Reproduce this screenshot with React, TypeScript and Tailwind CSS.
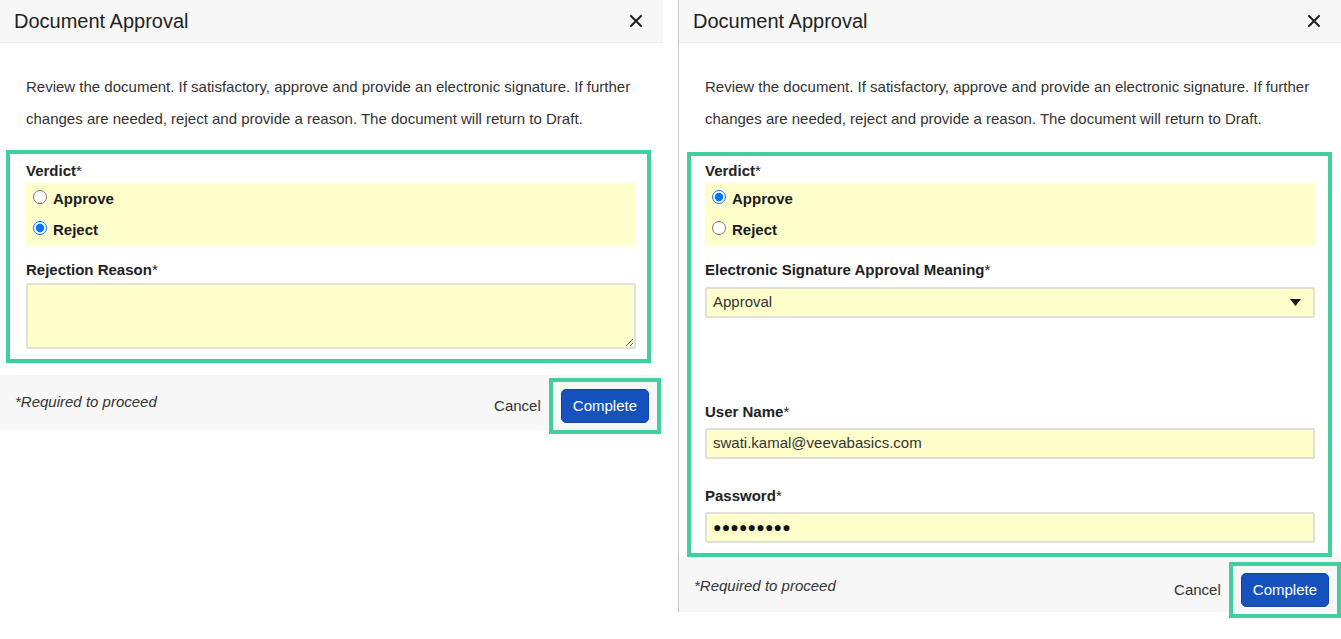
import type { ReactNode } from 'react'

function CloseIcon() {
  return (
    <svg width="12" height="12" viewBox="0 0 12 12" className="shrink-0">
      <path d="M1 1 L11 11 M11 1 L1 11" stroke="#1f1f1f" strokeWidth="2" strokeLinecap="round" />
    </svg>
  )
}

function Header() {
  return (
    <div className="flex h-[43px] items-center justify-between border-b border-[#ececec] bg-[#f7f7f7] pl-[14px] pr-[21px]">
      <h1 className="text-[20px] leading-none text-[#222]">Document Approval</h1>
      <CloseIcon />
    </div>
  )
}

function Intro() {
  return (
    <p className="mt-[28px] whitespace-nowrap px-[26px] text-[15px] leading-[32px] text-[#333]">
      Review the document. If satisfactory, approve and provide an electronic signature. If further
      <br />
      changes are needed, reject and provide a reason. The document will return to Draft.
    </p>
  )
}

function Label({ children, className = '' }: { children: ReactNode; className?: string }) {
  return (
    <div className={`text-[15px] font-bold leading-[18px] text-[#222] ${className}`}>
      {children}
      <span className="font-normal">*</span>
    </div>
  )
}

function RadioRow({ label, checked, name }: { label: string; checked: boolean; name: string }) {
  return (
    <label className="flex h-[31px] items-center pl-[7px]">
      <input type="radio" name={name} defaultChecked={checked} className="m-0 mb-[6px] mr-[6px] h-[14px] w-[14px]" />
      <span className="text-[15px] font-bold text-[#1a1a1a]">{label}</span>
    </label>
  )
}

function Verdict({ approve, name }: { approve: boolean; name: string }) {
  return (
    <div>
      <Label>Verdict</Label>
      <div className="mt-[3px] bg-[#ffffcc] pt-[1px]">
        <RadioRow name={name} label="Approve" checked={approve} />
        <RadioRow name={name} label="Reject" checked={!approve} />
      </div>
    </div>
  )
}

function Footer({ offset }: { offset: 'left' | 'right' }) {
  return (
    <div className={`flex h-[55px] items-center bg-[#f7f7f7] pl-[15px] ${offset === 'left' ? 'pr-[2px]' : 'pr-0'}`}>
      <div className={`flex-1 text-[15px] italic text-[#333] ${offset === 'left' ? '' : 'mt-[3px]'}`}>*Required to proceed</div>
      <div className={`flex items-center ${offset === 'left' ? 'mt-[7px]' : 'mt-[11px]'}`}>
        <span className="text-[15px] text-[#333]">Cancel</span>
        <div className="ml-[8px] border-4 border-[#40cf9d] px-[8px] py-[7px]">
          <button className="h-[34px] rounded-[5px] border border-[#0f44a6] bg-[#1652bd] px-[11px] text-[15px] text-white">
            Complete
          </button>
        </div>
      </div>
    </div>
  )
}

const field = 'flex h-[31px] items-center rounded-[2px] border-2 border-[#e0e0d8] bg-[#ffffcc] px-[6px] text-[15px] text-[#333]'

function LeftPanel() {
  return (
    <div className="w-[663px] shrink-0">
      <Header />
      <Intro />
      <div className="ml-[6px] mr-[12px] mt-[15px] border-4 border-[#40cf9d] pb-[10px] pl-[16px] pr-[11px] pt-[8px]">
        <Verdict name="left" approve={false} />
        <Label className="mt-[15px]">Rejection Reason</Label>
        <textarea
          className="mt-[4px] block h-[66px] w-full rounded-[2px] border-2 border-[#e0e0d8] bg-[#ffffcc]"
          defaultValue=""
        />
      </div>
      <div className="mt-[12px]">
        <Footer offset="left" />
      </div>
    </div>
  )
}

function RightPanel() {
  return (
    <div className="ml-[15px] w-[663px] shrink-0 border-l border-[#c4c4c4]">
      <Header />
      <Intro />
      <div className="ml-[8px] mr-[9px] mt-[17px] border-4 border-[#40cf9d] pb-[10px] pl-[14px] pr-[13px] pt-[6px]">
        <Verdict name="right" approve={true} />
        <Label className="mt-[15px]">Electronic Signature Approval Meaning</Label>
        <div className={`mt-[8px] justify-between pr-[12px] ${field}`}>
          <span>Approval</span>
          <svg width="11" height="7" viewBox="0 0 11 7">
            <path d="M0 0 H11 L5.5 7 Z" fill="#1a1a1a" />
          </svg>
        </div>
        <Label className="mt-[85px]">User Name</Label>
        <div className={`mt-[7px] ${field}`}>swati.kamal@veevabasics.com</div>
        <Label className="mt-[28px]">Password</Label>
        <div className={`mt-[7px] ${field}`}>
          <span className="text-[14px] tracking-[0.2px] text-[#111]">●●●●●●●●●</span>
        </div>
      </div>
      <Footer offset="right" />
    </div>
  )
}

export default function App() {
  return (
    <div className="flex min-h-[639px] w-[1341px] items-start bg-white font-['Liberation_Sans',Arial,sans-serif]">
      <LeftPanel />
      <RightPanel />
    </div>
  )
}
